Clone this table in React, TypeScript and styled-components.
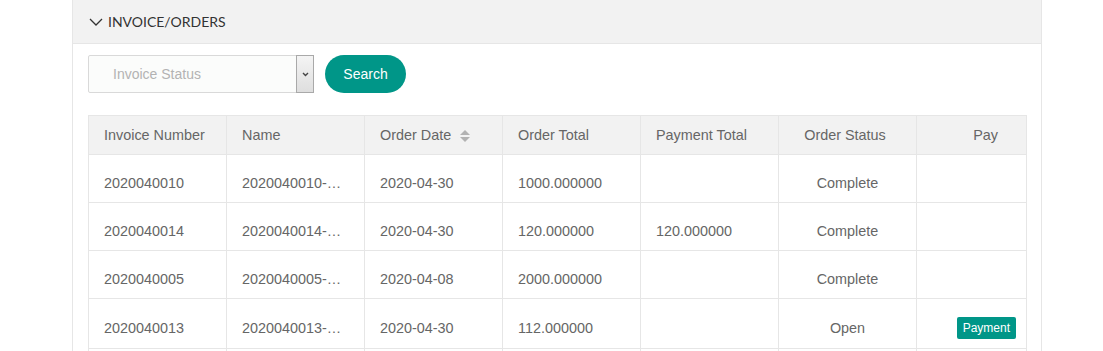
import styled, { createGlobalStyle } from "styled-components";

const GlobalStyle = createGlobalStyle`
  body {
    margin: 0;
    background: #fff;
    font-family: "Liberation Sans", Arial, sans-serif;
    color: #666;
  }
`;

const Page = styled.div`
  padding-left: 72px;
  width: 970px;
`;

const Panel = styled.section`
  border-left: 1px solid #e6e6e6;
  border-right: 1px solid #e6e6e6;
  background: #fff;
`;

const PanelHeader = styled.div`
  height: 43px;
  display: flex;
  align-items: center;
  gap: 5px;
  padding-left: 16px;
  background: #f2f2f2;
  border-bottom: 1px solid #e6e6e6;
  font-family: Lato, "Liberation Sans", sans-serif;
  font-size: 14px;
  color: #333;
  text-transform: uppercase;
`;

const PanelBody = styled.div`
  padding: 11px 15px 0 15px;
`;

const Toolbar = styled.div`
  display: flex;
  align-items: center;
  gap: 11px;
  height: 38px;
`;

const SelectBox = styled.div`
  width: 226px;
  height: 38px;
  box-sizing: border-box;
  display: flex;
  border: 1px solid #d9d9d9;
  border-radius: 2px;
  background: #fbfcfb;
`;

const Placeholder = styled.span`
  flex: 1;
  padding-left: 24px;
  line-height: 36px;
  font-size: 14px;
  color: #b3b3b3;
`;

const Caret = styled.span`
  width: 16px;
  display: flex;
  align-items: center;
  justify-content: center;
  border: 1px solid #a9a9a9;
  margin: -1px -1px -1px 0;
  background: linear-gradient(#f4f4f4, #dedede);
`;

const SearchButton = styled.button`
  width: 81px;
  height: 38px;
  border: none;
  border-radius: 19px;
  background: #009688;
  color: #fff;
  font-family: "Liberation Sans", Arial, sans-serif;
  font-size: 14px;
  cursor: pointer;
`;

const Table = styled.table`
  margin-top: 22px;
  width: 938px;
  border-collapse: collapse;
  table-layout: fixed;
  font-size: 14.4px;
`;

const Col = styled.col<{ $width: number }>`
  width: ${p => p.$width}px;
`;

const Th = styled.th<{ $align?: string }>`
  height: 38px;
  padding: 0 20px 0 15px;
  background: #f2f2f2;
  border: 1px solid #e6e6e6;
  font-weight: normal;
  color: #666;
  text-align: ${p => p.$align || "left"};
  white-space: nowrap;
  overflow: hidden;
  text-overflow: ellipsis;
`;

const PayHead = styled(Th)`
  padding-right: 28px;
`;

const Td = styled.td<{ $align?: string }>`
  padding: 18px 15px 9px;
  line-height: 20px;
  border: 1px solid #e6e6e6;
  color: #666;
  text-align: ${p => p.$align || "left"};
  white-space: nowrap;
  overflow: hidden;
  text-overflow: ellipsis;
`;

const PayCell = styled(Td)`
  padding-right: 10px;
`;

const SortIcon = styled.span`
  display: inline-flex;
  flex-direction: column;
  gap: 2px;
  margin-left: 9px;
  vertical-align: middle;
  &::before,
  &::after {
    content: "";
    border-left: 5px solid transparent;
    border-right: 5px solid transparent;
  }
  &::before {
    border-bottom: 5px solid #b2b2b2;
  }
  &::after {
    border-top: 5px solid #b2b2b2;
  }
`;

const PayButton = styled.button`
  height: 22px;
  padding: 0 6px;
  border: none;
  border-radius: 2px;
  background: #009688;
  color: #fff;
  font-family: "Liberation Sans", Arial, sans-serif;
  font-size: 12px;
  vertical-align: middle;
`;

const orders = [
  { no: "2020040010", date: "2020-04-30", total: "1000.000000", paid: "", status: "Complete" },
  { no: "2020040014", date: "2020-04-30", total: "120.000000", paid: "120.000000", status: "Complete" },
  { no: "2020040005", date: "2020-04-08", total: "2000.000000", paid: "", status: "Complete" },
  { no: "2020040013", date: "2020-04-30", total: "112.000000", paid: "", status: "Open" },
  { no: "2020040011", date: "2020-04-30", total: "300.000000", paid: "", status: "Open" },
];

const widths = [138, 138, 138, 138, 138, 138, 110];

export default function App() {
  return (
    <>
      <GlobalStyle />
      <Page>
        <Panel>
          <PanelHeader>
            <svg width="14" height="8" viewBox="0 0 14 8">
              <path d="M1 1l6 6 6-6" fill="none" stroke="#333" strokeWidth="1.3" />
            </svg>
            Invoice/Orders
          </PanelHeader>
          <PanelBody>
            <Toolbar>
              <SelectBox>
                <Placeholder>Invoice Status</Placeholder>
                <Caret>
                  <svg width="7" height="5" viewBox="0 0 7 5">
                    <path d="M1 1l2.5 2.5L6 1" fill="none" stroke="#444" strokeWidth="1.4" />
                  </svg>
                </Caret>
              </SelectBox>
              <SearchButton>Search</SearchButton>
            </Toolbar>
            <Table>
              <colgroup>
                {widths.map((w, i) => (
                  <Col key={i} $width={w} />
                ))}
              </colgroup>
              <thead>
                <tr>
                  <Th>Invoice Number</Th>
                  <Th>Name</Th>
                  <Th>
                    Order Date
                    <SortIcon />
                  </Th>
                  <Th>Order Total</Th>
                  <Th>Payment Total</Th>
                  <Th $align="center">Order Status</Th>
                  <PayHead $align="right">Pay</PayHead>
                </tr>
              </thead>
              <tbody>
                {orders.map(o => (
                  <tr key={o.no}>
                    <Td>{o.no}</Td>
                    <Td>{o.no}-Order</Td>
                    <Td>{o.date}</Td>
                    <Td>{o.total}</Td>
                    <Td>{o.paid}</Td>
                    <Td $align="center">{o.status}</Td>
                    <PayCell $align="right">
                      {o.status === "Open" && <PayButton>Payment</PayButton>}
                    </PayCell>
                  </tr>
                ))}
              </tbody>
            </Table>
          </PanelBody>
        </Panel>
      </Page>
    </>
  );
}
